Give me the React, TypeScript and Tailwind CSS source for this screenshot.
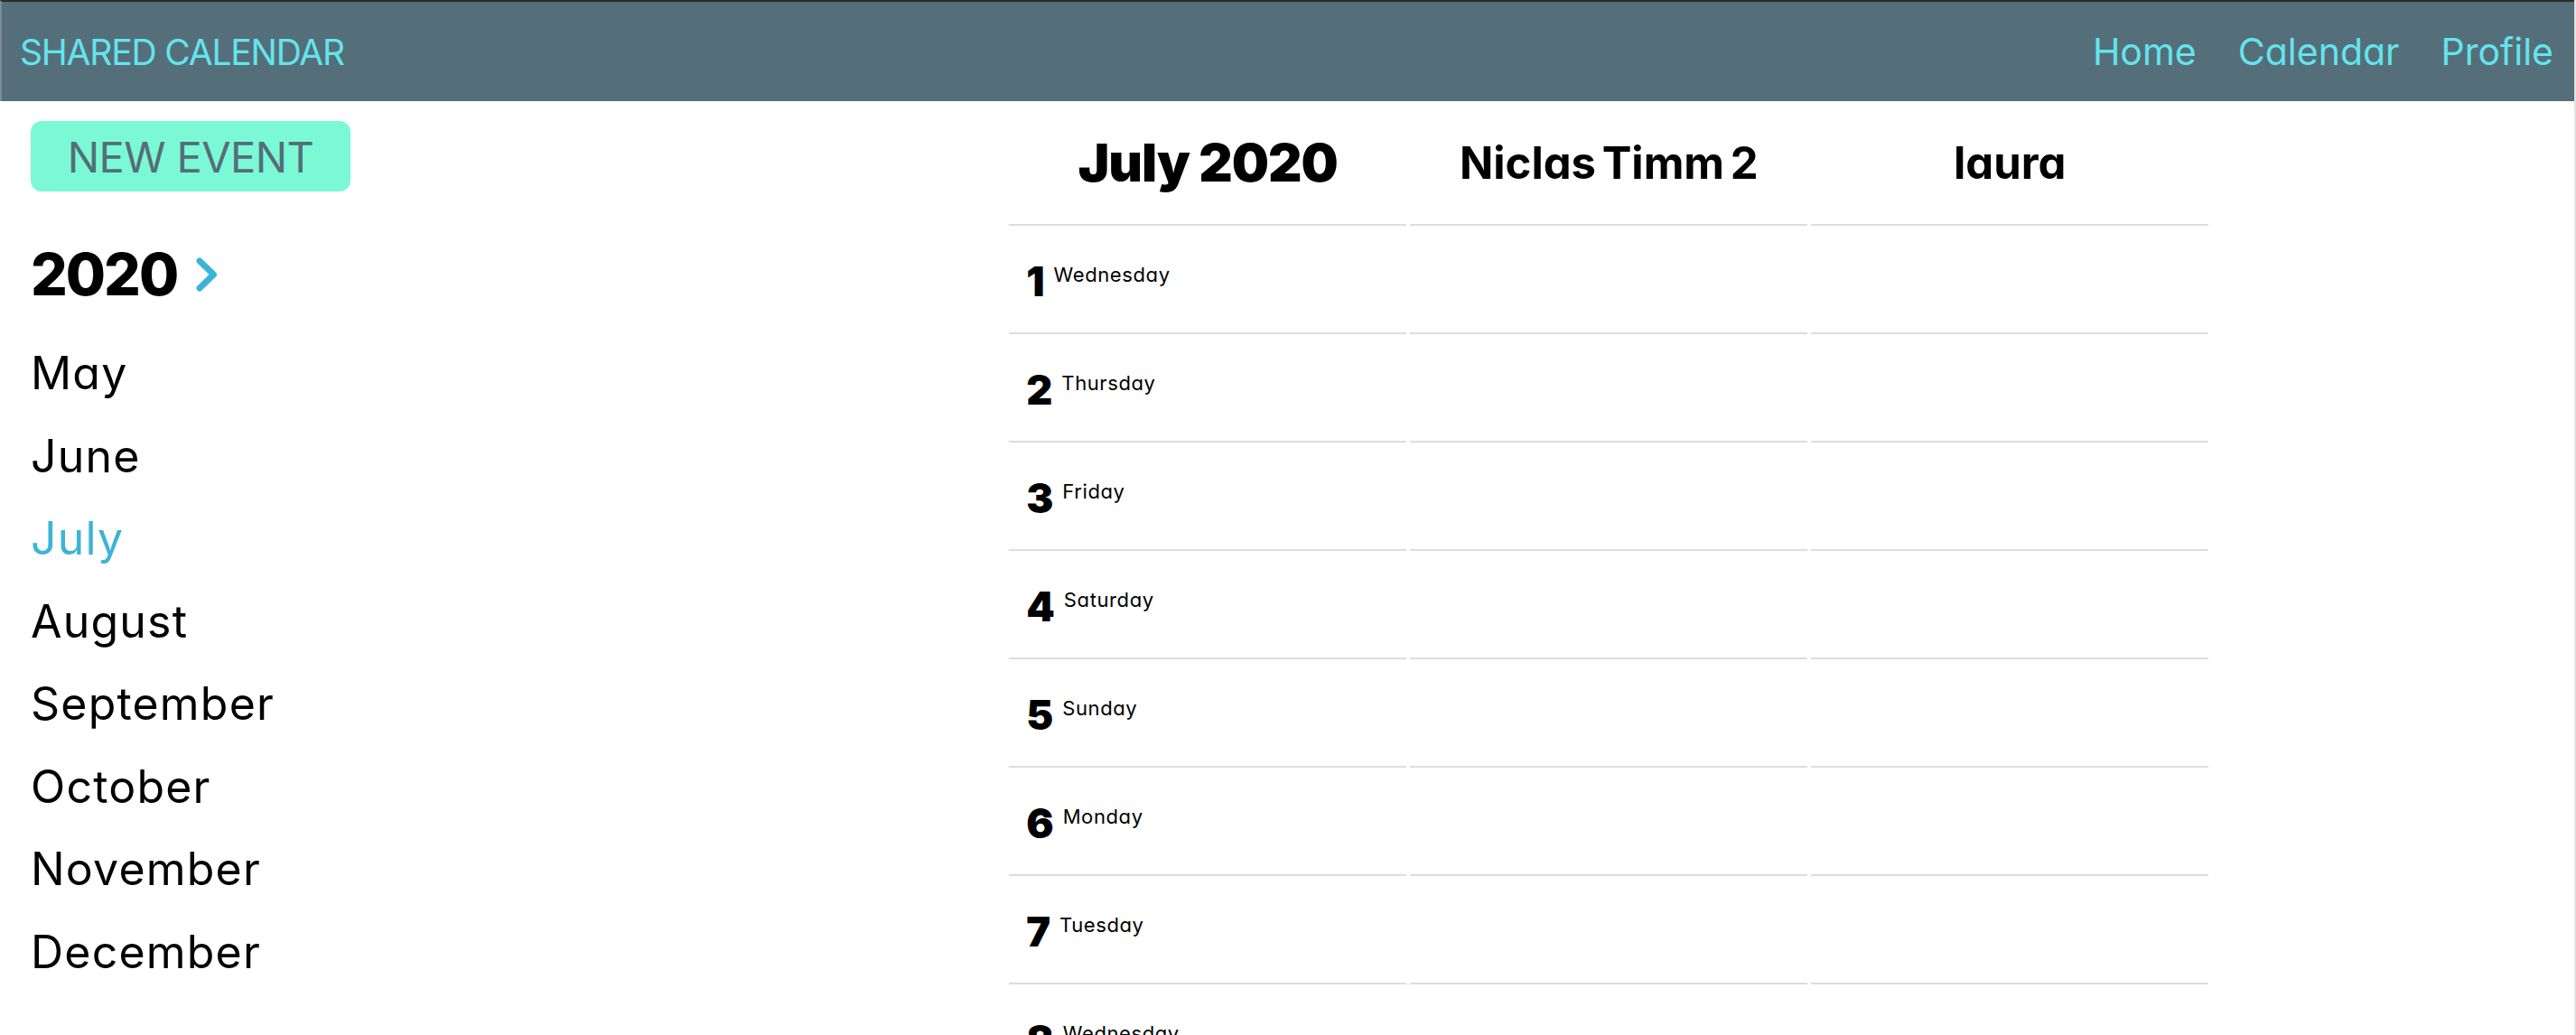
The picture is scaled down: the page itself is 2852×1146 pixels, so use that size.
import React from 'react';

const months = ['May', 'June', 'July', 'August', 'September', 'October', 'November', 'December'];
const weekdays = ['Wednesday', 'Thursday', 'Friday', 'Saturday', 'Sunday', 'Monday', 'Tuesday'];
const days = Array.from({ length: 31 }, (_, i) => ({ day: i + 1, name: weekdays[i % 7] }));
const people = ['Niclas Timm 2', 'laura'];

function Header() {
  return (
    <header className="h-[112px] shrink-0 border-t-2 border-l-2 border-t-[#2b2b2b] border-l-[#7b8d95] bg-[#546e7a] flex items-center justify-between pl-[20px] pr-[23px] text-[#64e4ec] leading-none">
      <span className="text-[39px] tracking-[-1.2px]">SHARED CALENDAR</span>
      <nav className="flex items-center gap-[46px] text-[41px]">
        <a>Home</a>
        <a>Calendar</a>
        <a>Profile</a>
      </nav>
    </header>
  );
}

function Sidebar() {
  return (
    <aside className="w-1/4 shrink-0 pl-[34px]">
      <button className="mt-[22px] w-[354px] h-[78px] rounded-[12px] bg-[#7bf9d5] text-[#546e7a] text-[47px] tracking-[-0.6px] leading-none">
        NEW EVENT
      </button>
      <div className="mt-[52px] h-[80px] flex items-center">
        <span className="text-[64px] tracking-[-2px] font-extrabold leading-[80px] text-black">2020</span>
        <svg className="ml-[18px]" width="26" height="40" viewBox="0 0 26 40" fill="none">
          <polyline points="7,5 22.5,20 7,35" stroke="#3cb4d8" strokeWidth="7" strokeLinecap="round" strokeLinejoin="round" />
        </svg>
      </div>
      <ul className="mt-[24px]">
        {months.map((m) => (
          <li key={m} className={`text-[50px] tracking-[1.2px] leading-[91.5px] ${m === 'July' ? 'text-[#3cb4d8]' : 'text-black'}`}>
            {m}
          </li>
        ))}
      </ul>
    </aside>
  );
}

function DayCell({ day, name }: { day: number; name: string }) {
  return (
    <div className="h-[120px] border-b-2 border-[#dddddd] flex items-center pt-[5px] pl-[19px]">
      <div className="flex items-start gap-[10px]">
        <span className="text-[45px] font-black leading-[33px] text-black">{day}</span>
        <span className="mt-[1px] text-[22px] tracking-[0.6px] leading-[16px] text-black">{name}</span>
      </div>
    </div>
  );
}

export default function App() {
  return (
    <div
      className="h-screen overflow-hidden flex flex-col bg-white border-r-2 border-[#e2e2e2] [font-family:Inter,'Noto_Sans',sans-serif] [font-feature-settings:'cv11']"
    >
      <Header />
      <div className="flex flex-1">
        <Sidebar />
        <main className="flex-1 flex justify-center">
          <div className="grid grid-cols-[repeat(3,440px)] gap-x-[4px] content-start">
            <div className="h-[138px] border-b-2 border-[#dddddd] flex items-center justify-center text-[58px] tracking-[-1px] font-black leading-none text-black">
              July 2020
            </div>
            {people.map((p) => (
              <div key={p} className="h-[138px] border-b-2 border-[#dddddd] flex items-center justify-center text-[49px] [word-spacing:-5px] font-bold leading-none text-black">
                {p}
              </div>
            ))}
            {days.map((d) => (
              <React.Fragment key={d.day}>
                <DayCell day={d.day} name={d.name} />
                <div className="h-[120px] border-b-2 border-[#dddddd]" />
                <div className="h-[120px] border-b-2 border-[#dddddd]" />
              </React.Fragment>
            ))}
          </div>
        </main>
      </div>
    </div>
  );
}
